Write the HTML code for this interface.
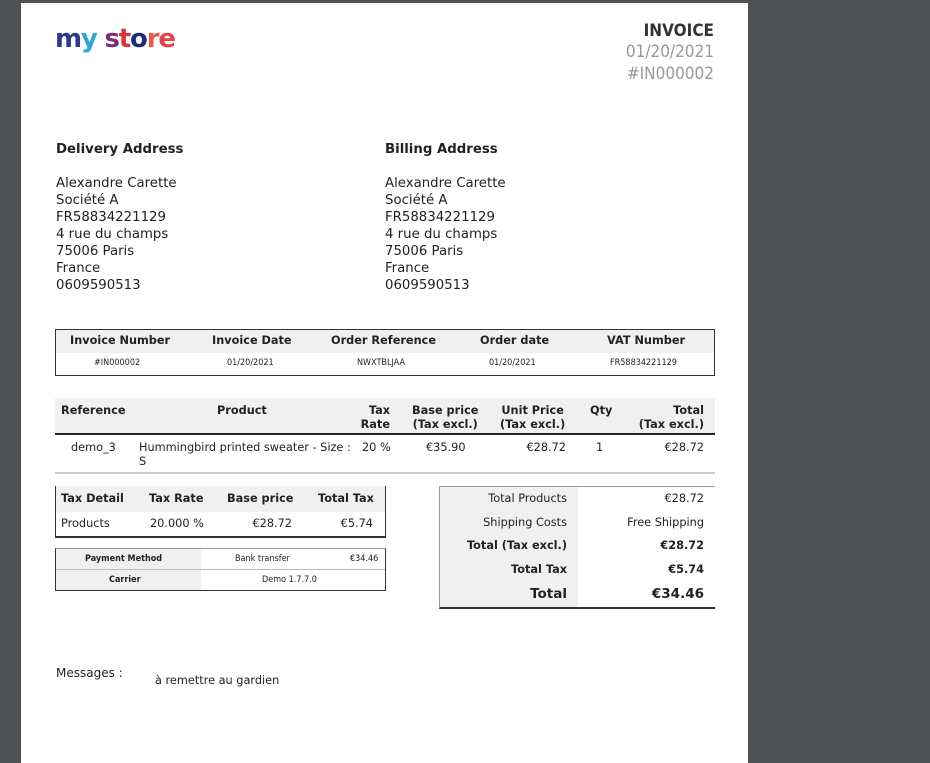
<!DOCTYPE html>
<html><head><meta charset="utf-8"><style>
*{margin:0;padding:0;box-sizing:border-box}
body{width:930px;height:750px;background:#505356;position:relative;overflow:hidden;font-family:"DejaVu Sans","Liberation Sans",sans-serif;color:#222}
#page{position:absolute;left:21px;top:3px;width:727px;height:760px;background:#fff}
.a{position:absolute;white-space:nowrap}
.b{font-weight:bold}
.c{font-family:"DejaVu Sans Condensed","DejaVu Sans",sans-serif}
.box{position:absolute}
</style></head><body>
<div id="page"></div>
<div class="a b" style="left:55px;top:21px;font-size:26px;letter-spacing:-1.2px;line-height:36px"><span style="color:#2a3a8c">m</span><span style="color:#2fa6d6">y</span> <span style="color:#7a2d7a">s</span><span style="color:#d9343c">t</span><span style="color:#1f2f7a">o</span><span style="color:#e85a4a">r</span><span style="color:#e2444e">e</span></div>
<div class="a b c" style="right:216px;top:21px;font-size:17px;line-height:20px;color:#333">INVOICE</div>
<div class="a c" style="right:216px;top:42px;font-size:17px;line-height:20px;color:#999">01/20/2021</div>
<div class="a c" style="right:216px;top:64px;font-size:17px;line-height:20px;color:#999">#IN000002</div>

<div class="a b" style="left:56px;top:141px;font-size:13.3px;line-height:17px">Delivery Address</div>
<div class="a" style="left:56px;top:175px;font-size:13.3px;line-height:17px">Alexandre Carette<br>Société A<br>FR58834221129<br>4 rue du champs<br>75006 Paris<br>France<br>0609590513</div>
<div class="a b" style="left:385px;top:141px;font-size:13.3px;line-height:17px">Billing Address</div>
<div class="a" style="left:385px;top:175px;font-size:13.3px;line-height:17px">Alexandre Carette<br>Société A<br>FR58834221129<br>4 rue du champs<br>75006 Paris<br>France<br>0609590513</div>

<!-- info table -->
<div class="box" style="left:55px;top:329px;width:660px;height:47px;border:1px solid #333;background:#fff"></div>
<div class="box" style="left:56px;top:330px;width:658px;height:23px;background:#f0f0f0"></div>
<div class="a b" style="left:70px;top:334px;font-size:11.3px">Invoice Number</div>
<div class="a b" style="left:212px;top:334px;font-size:11.3px">Invoice Date</div>
<div class="a b" style="left:331px;top:334px;font-size:11.3px">Order Reference</div>
<div class="a b" style="left:480px;top:334px;font-size:11.3px">Order date</div>
<div class="a b" style="left:607px;top:334px;font-size:11.3px">VAT Number</div>
<div class="a c" style="left:94px;top:358px;font-size:9px">#IN000002</div>
<div class="a c" style="left:227px;top:358px;font-size:9px">01/20/2021</div>
<div class="a c" style="left:357px;top:358px;font-size:9px">NWXTBLJAA</div>
<div class="a c" style="left:489px;top:358px;font-size:9px">01/20/2021</div>
<div class="a c" style="left:610px;top:358px;font-size:9px">FR58834221129</div>

<!-- product table -->
<div class="box" style="left:55px;top:398px;width:660px;height:37px;background:#f0f0f0;border-bottom:2px solid #222"></div>
<div class="a b" style="left:61px;top:404px;font-size:11.3px">Reference</div>
<div class="a b" style="left:217px;top:404px;font-size:11.3px">Product</div>
<div class="a b" style="right:540px;top:404px;font-size:11.3px;text-align:right;line-height:14px">Tax<br>Rate</div>
<div class="a b" style="left:412px;top:404px;font-size:11.3px;line-height:14px;text-align:center">Base price<br>(Tax excl.)</div>
<div class="a b" style="left:500px;top:404px;font-size:11.3px;line-height:14px;text-align:center">Unit Price<br>(Tax excl.)</div>
<div class="a b" style="left:590px;top:404px;font-size:11.3px">Qty</div>
<div class="a b" style="right:226px;top:404px;font-size:11.3px;line-height:14px;text-align:right">Total<br>(Tax excl.)</div>
<div class="a" style="left:71px;top:441px;font-size:11.3px;line-height:14px">demo_3</div>
<div class="a" style="left:139px;top:441px;font-size:11.3px;line-height:14px">Hummingbird printed sweater - Size :<br>S</div>
<div class="a" style="left:362px;top:441px;font-size:11.3px;line-height:14px">20 %</div>
<div class="a" style="left:426px;top:441px;font-size:11.3px;line-height:14px">€35.90</div>
<div class="a" style="right:364px;top:441px;font-size:11.3px;line-height:14px">€28.72</div>
<div class="a" style="left:596px;top:441px;font-size:11.3px;line-height:14px">1</div>
<div class="a" style="right:226px;top:441px;font-size:11.3px;line-height:14px">€28.72</div>
<div class="box" style="left:55px;top:472px;width:660px;height:2px;background:#ccc"></div>

<!-- tax table -->
<div class="box" style="left:55px;top:486px;width:331px;height:52px;border-left:1px solid #333;border-bottom:2px solid #333;border-right:1px solid #333;background:#fff"></div>
<div class="box" style="left:56px;top:486px;width:329px;height:26px;background:#f0f0f0"></div>
<div class="a b" style="left:61px;top:492px;font-size:11.3px">Tax Detail</div>
<div class="a b" style="left:149px;top:492px;font-size:11.3px">Tax Rate</div>
<div class="a b" style="left:227px;top:492px;font-size:11.3px">Base price</div>
<div class="a b" style="left:318px;top:492px;font-size:11.3px">Total Tax</div>
<div class="a" style="left:61px;top:517px;font-size:11.3px">Products</div>
<div class="a" style="left:150px;top:517px;font-size:11.3px">20.000 %</div>
<div class="a" style="right:638px;top:517px;font-size:11.3px">€28.72</div>
<div class="a" style="right:557px;top:517px;font-size:11.3px">€5.74</div>

<!-- payment -->
<div class="box" style="left:55px;top:548px;width:331px;height:43px;border:1px solid #333;border-top:1px solid #999"></div>
<div class="box" style="left:56px;top:549px;width:145px;height:41px;background:#f0f0f0"></div>
<div class="box" style="left:56px;top:569px;width:329px;height:1px;background:#bbb"></div>
<div class="a b c" style="left:85px;top:554px;font-size:9px">Payment Method</div>
<div class="a c" style="left:235px;top:554px;font-size:9px">Bank transfer</div>
<div class="a c" style="left:350px;top:554px;font-size:9px">€34.46</div>
<div class="a b c" style="left:109px;top:575px;font-size:9px">Carrier</div>
<div class="a c" style="left:262px;top:575px;font-size:9px">Demo 1.7.7.0</div>

<!-- totals -->
<div class="box" style="left:439px;top:486px;width:276px;height:123px;border-top:1px solid #999;border-left:1px solid #999;border-bottom:2px solid #333"></div>
<div class="box" style="left:440px;top:487px;width:138px;height:120px;background:#f0f0f0"></div>
<div class="a" style="right:363px;top:492px;font-size:11.3px">Total Products</div>
<div class="a" style="right:226px;top:492px;font-size:11.3px">€28.72</div>
<div class="a" style="right:363px;top:516px;font-size:11.3px">Shipping Costs</div>
<div class="a" style="right:226px;top:516px;font-size:11.3px">Free Shipping</div>
<div class="a b" style="right:363px;top:539px;font-size:11.3px">Total (Tax excl.)</div>
<div class="a b" style="right:226px;top:539px;font-size:11.3px">€28.72</div>
<div class="a b" style="right:363px;top:563px;font-size:11.3px">Total Tax</div>
<div class="a b" style="right:226px;top:563px;font-size:11.3px">€5.74</div>
<div class="a b" style="right:363px;top:586px;font-size:13.5px">Total</div>
<div class="a b" style="right:226px;top:586px;font-size:13.5px">€34.46</div>

<div class="a" style="left:56px;top:666px;font-size:12px">Messages :</div>
<div class="a" style="left:155px;top:674px;font-size:11.3px">à remettre au gardien</div>
</body></html>
